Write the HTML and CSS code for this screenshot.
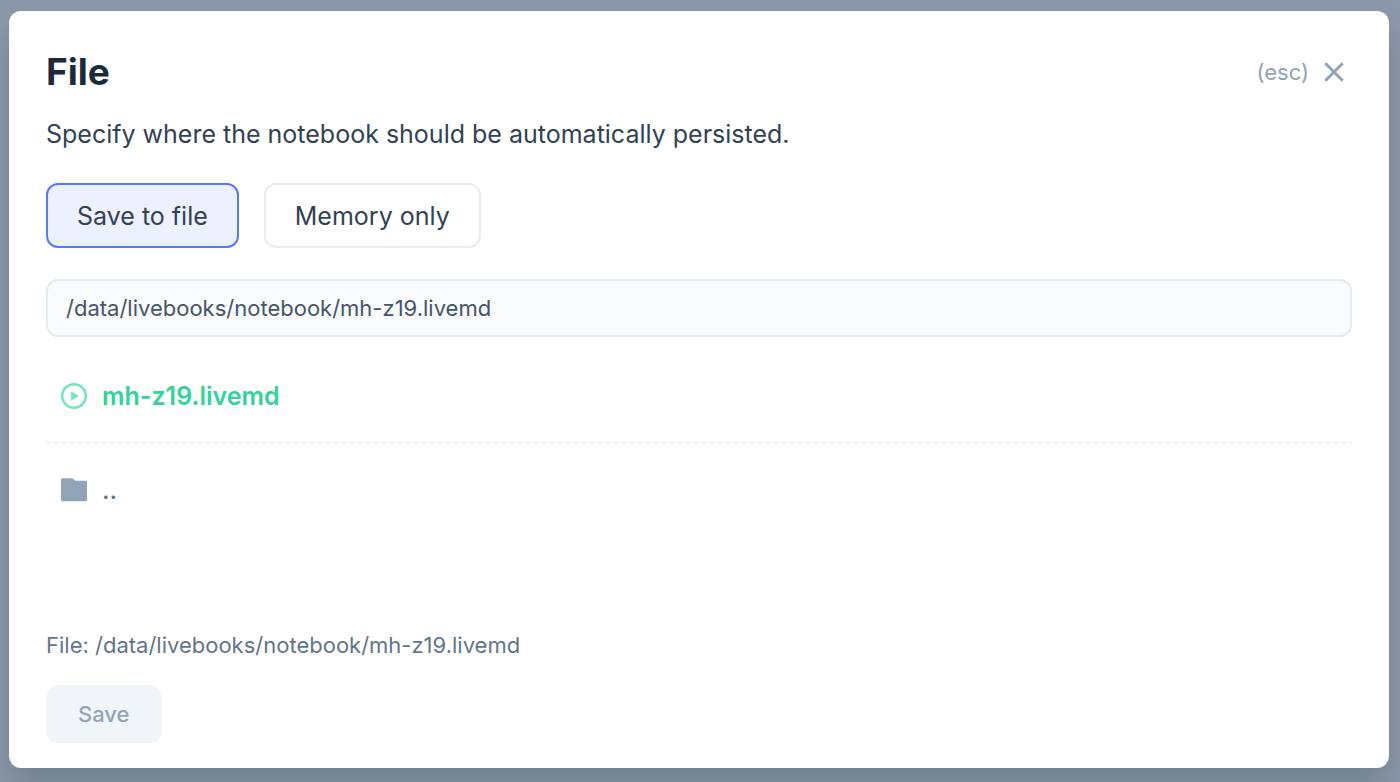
FILE: index.html
```html
<!DOCTYPE html>
<html lang="en">
<head>
<meta charset="utf-8">
<meta name="viewport" content="width=device-width, initial-scale=1">
<title>File</title>
<link rel="stylesheet" href="styles.css">
</head>
<body>
<main class="modal" role="dialog" aria-labelledby="title">
  <header class="modal-header">
    <h1 class="title" id="title">File</h1>
    <button class="close" type="button" aria-label="Close (esc)">
      <span>(esc)</span>
      <svg class="close-icon" viewBox="0 0 20 20" aria-hidden="true"><path d="M1.3 1.3l17.4 17.4M18.7 1.3l-17.4 17.4"/></svg>
    </button>
  </header>
  <p class="intro">Specify where the notebook should be automatically persisted.</p>
  <div class="choices">
    <button class="choice choice-active" type="button">Save to file</button>
    <button class="choice" type="button">Memory only</button>
  </div>
  <input class="path" type="text" aria-label="File path" value="/data/livebooks/notebook/mh-z19.livemd">
  <div class="running">
    <button class="entry entry-running" type="button">
      <svg class="entry-icon" viewBox="0 0 26 26" aria-hidden="true"><circle cx="13" cy="13" r="11.8"/><path d="M10.2 8.2v9.6l7.6-4.8z"/></svg>
      <span>mh-z19.livemd</span>
    </button>
  </div>
  <div class="files">
    <button class="entry" type="button">
      <svg class="entry-icon folder" viewBox="0 0 26 26" aria-hidden="true"><path d="M1.2 1.2H11.6L14.2 3.8H24.8Q26 3.8 26 5V23Q26 24.2 24.8 24.2H1.2Q0 24.2 0 23V2.4Q0 1.2 1.2 1.2z"/></svg>
      <span>..</span>
    </button>
  </div>
  <footer class="footer">
    <p class="summary">File: /data/livebooks/notebook/mh-z19.livemd</p>
    <button class="save" type="button" disabled>Save</button>
  </footer>
</main>
</body>
</html>
```
FILE: styles.css
```css
* { box-sizing: border-box; }

body {
  margin: 0;
  min-height: 100vh;
  padding: 11px 11px 14px 9px;
  display: flex;
  background: #8d99aa;
  color: #304254;
  font-family: Inter, sans-serif;
  font-size: 25px;
}

button, input { font: inherit; color: inherit; }
button { border: 0; background: none; padding: 0; }
h1, p { margin: 0; }

.modal {
  flex: 1;
  display: flex;
  flex-direction: column;
  padding: 37px 37px 25px;
  background: #fff;
  border-radius: 12px;
  box-shadow: 0 20px 30px rgba(90, 108, 120, 0.5);
}

.modal-header {
  display: flex;
  justify-content: space-between;
  align-items: center;
}

.title {
  font-size: 37px;
  line-height: 48px;
  font-weight: 700;
  color: #1c2a3a;
}

.close {
  display: flex;
  align-items: center;
  gap: 15px;
  padding-right: 8px;
  font-size: 22px;
  color: #91a4b7;
}

.close-icon {
  width: 20px;
  height: 20px;
  fill: none;
  stroke: currentColor;
  stroke-width: 3;
}

.intro { margin-top: 20px; line-height: 37px; }

.choices { display: flex; gap: 25px; margin-top: 30px; }

.choice {
  height: 65px;
  padding: 0 29px;
  border: 2px solid #e6ecf3;
  border-radius: 12px;
}

.choice-active { border-color: #5579ff; background: #ecf0ff; }

.path {
  width: 100%;
  height: 58px;
  margin-top: 31px;
  padding: 0 18px;
  border: 2px solid #e4ebf2;
  border-radius: 12px;
  background: #f8fafc;
  color: #445668;
  font-size: 22px;
}

.running {
  display: flex;
  padding: 34px 15px 22px;
  background: repeating-linear-gradient(to right, #d9e4ee 0 5px, transparent 5px 8px) bottom / 100% 1px no-repeat;
}

.files { flex: 1; padding: 22px 15px; }

.entry {
  display: flex;
  align-items: center;
  gap: 15px;
  height: 50px;
  color: #61758a;
  font-weight: 500;
}

.entry-running { color: #33d399; font-weight: 600; }
.entry-icon { width: 26px; height: 26px; fill: #6ee7b7; }
.entry-icon circle { fill: none; stroke: #6ee7b7; stroke-width: 2.4; }
.entry-icon.folder { fill: #91a4b7; }

.summary {
  font-size: 22px;
  line-height: 32px;
  color: #61758a;
}

.save {
  height: 58px;
  margin-top: 24px;
  padding: 0 32px;
  border-radius: 12px;
  background: #f0f5f9;
  color: #91a4b7;
  font-size: 22px;
  font-weight: 500;
}
```
